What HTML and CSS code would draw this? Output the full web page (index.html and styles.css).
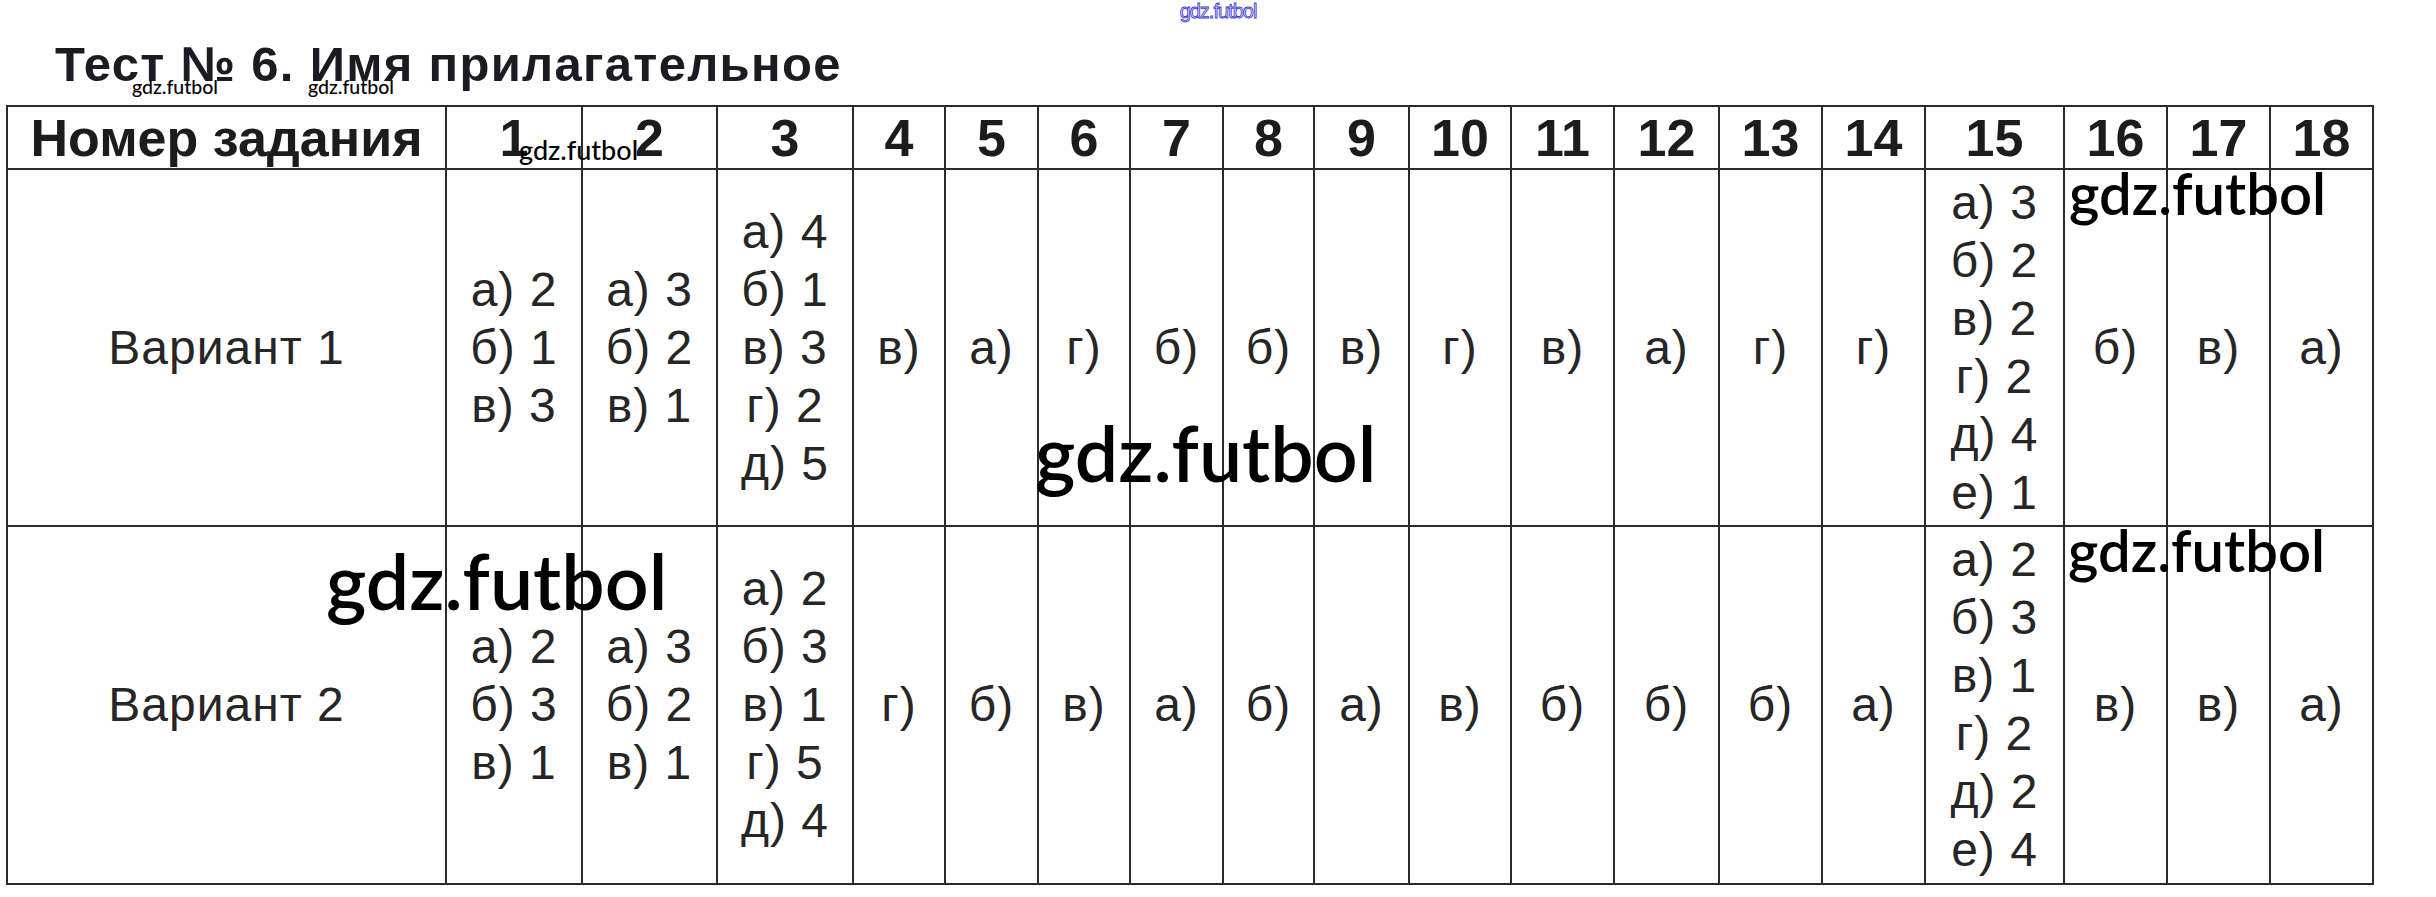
FILE: index.html
```html
<!DOCTYPE html>
<html lang="ru">
<head>
<meta charset="utf-8">
<title>Тест № 6. Имя прилагательное</title>
<link rel="stylesheet" href="styles.css">
</head>
<body>
<div class="page">
  <div class="wm-top">gdz.futbol</div>
  <h1 class="title">Тест № 6. Имя прилагательное</h1>
  <table class="grid">
    <colgroup>
      <col class="w439"><col class="w136"><col class="w135"><col class="w136">
      <col class="w92"><col class="w93"><col class="w92"><col class="w93"><col class="w91">
      <col class="w95"><col class="w102"><col class="w103"><col class="w105"><col class="w103">
      <col class="w103"><col class="w139"><col class="w103"><col class="w103"><col class="w103">
    </colgroup>
    <tr class="head">
      <td>Номер задания</td><td>1</td><td>2</td><td>3</td><td>4</td><td>5</td><td>6</td><td>7</td><td>8</td><td>9</td><td>10</td><td>11</td><td>12</td><td>13</td><td>14</td><td>15</td><td>16</td><td>17</td><td>18</td>
    </tr>
    <tr class="row r1">
      <td>Вариант 1</td>
      <td><span class="ln">а) 2</span><span class="ln">б) 1</span><span class="ln">в) 3</span></td>
      <td><span class="ln">а) 3</span><span class="ln">б) 2</span><span class="ln">в) 1</span></td>
      <td><span class="ln">а) 4</span><span class="ln">б) 1</span><span class="ln">в) 3</span><span class="ln">г) 2</span><span class="ln">д) 5</span></td>
      <td>в)</td><td>а)</td><td>г)</td><td>б)</td><td>б)</td><td>в)</td><td>г)</td><td>в)</td><td>а)</td><td>г)</td><td>г)</td>
      <td><span class="ln">а) 3</span><span class="ln">б) 2</span><span class="ln">в) 2</span><span class="ln">г) 2</span><span class="ln">д) 4</span><span class="ln">е) 1</span></td>
      <td>б)</td><td>в)</td><td>а)</td>
    </tr>
    <tr class="row r2">
      <td>Вариант 2</td>
      <td><span class="ln">а) 2</span><span class="ln">б) 3</span><span class="ln">в) 1</span></td>
      <td><span class="ln">а) 3</span><span class="ln">б) 2</span><span class="ln">в) 1</span></td>
      <td><span class="ln">а) 2</span><span class="ln">б) 3</span><span class="ln">в) 1</span><span class="ln">г) 5</span><span class="ln">д) 4</span></td>
      <td>г)</td><td>б)</td><td>в)</td><td>а)</td><td>б)</td><td>а)</td><td>в)</td><td>б)</td><td>б)</td><td>б)</td><td>а)</td>
      <td><span class="ln">а) 2</span><span class="ln">б) 3</span><span class="ln">в) 1</span><span class="ln">г) 2</span><span class="ln">д) 2</span><span class="ln">е) 4</span></td>
      <td>в)</td><td>в)</td><td>а)</td>
    </tr>
  </table>

  <div class="wm wm-s1">gdz.futbol</div>
  <div class="wm wm-s2">gdz.futbol</div>
  <div class="wm wm-h">gdz.futbol</div>
  <div class="wm wm-big1">gdz.futbol</div>
  <div class="wm wm-big2">gdz.futbol</div>
  <div class="wm wm-r1">gdz.futbol</div>
  <div class="wm wm-r2">gdz.futbol</div>
</div>
</body>
</html>
```

FILE: styles.css
```css
html, body {
  margin: 0;
  padding: 0;
  background: #ffffff;
}

.page {
  position: relative;
  width: 2436px;
  height: 897px;
  padding-top: 40px;
  box-sizing: border-box;
  font-family: "Liberation Sans", Arial, sans-serif;
  color: #262626;
}

.title {
  margin: 0 0 17px 55px;
  font-size: 49px;
  line-height: 48px;
  font-weight: bold;
  color: #1c1a22;
  letter-spacing: 1.3px;
}

.grid {
  margin-left: 6px;
  border-collapse: collapse;
  table-layout: fixed;
  width: 2368px;
}

.grid td {
  border: 2px solid #2b2b2b;
  padding: 0;
  text-align: center;
  vertical-align: middle;
}

.head td {
  height: 61px;
  font-size: 52px;
  line-height: 56px;
  font-weight: bold;
  color: #1c1c1c;
}

.row td {
  font-size: 48px;
  line-height: 58px;
  letter-spacing: 1px;
}

.r1 td { height: 355px; }
.r2 td { height: 356px; }

.ln { display: block; }

.w439 { width: 439px; }
.w136 { width: 136px; }
.w135 { width: 135px; }
.w139 { width: 139px; }
.w105 { width: 105px; }
.w103 { width: 103px; }
.w102 { width: 102px; }
.w95 { width: 95px; }
.w93 { width: 93px; }
.w92 { width: 92px; }
.w91 { width: 91px; }

/* watermarks overlaying the scan */
.wm-top {
  position: absolute;
  top: 1px;
  left: 0;
  right: 0;
  text-align: center;
  font-family: "Liberation Sans", Arial, sans-serif;
  font-size: 20px;
  line-height: 20px;
  letter-spacing: -1px;
  color: #d6d6ff;
  -webkit-text-stroke: 0.8px #3a3ad0;
}

.wm {
  position: absolute;
  font-family: Lato, "Open Sans", sans-serif;
  font-weight: 600;
  line-height: 1;
  color: #000000;
  white-space: nowrap;
}

.wm-s1 { left: 132px; top: 77px; font-size: 19.5px; font-weight: 500; }
.wm-s2 { left: 308px; top: 77px; font-size: 19.5px; font-weight: 500; }
.wm-h { left: 519px; top: 136px; font-size: 27px; font-weight: 500; }
.wm-big1 { left: 1035px; top: 414px; font-size: 77px; }
.wm-big2 { left: 326px; top: 542px; font-size: 77px; }
.wm-r1 { left: 2069px; top: 164px; font-size: 58px; }
.wm-r2 { left: 2068px; top: 521px; font-size: 58px; }
```
